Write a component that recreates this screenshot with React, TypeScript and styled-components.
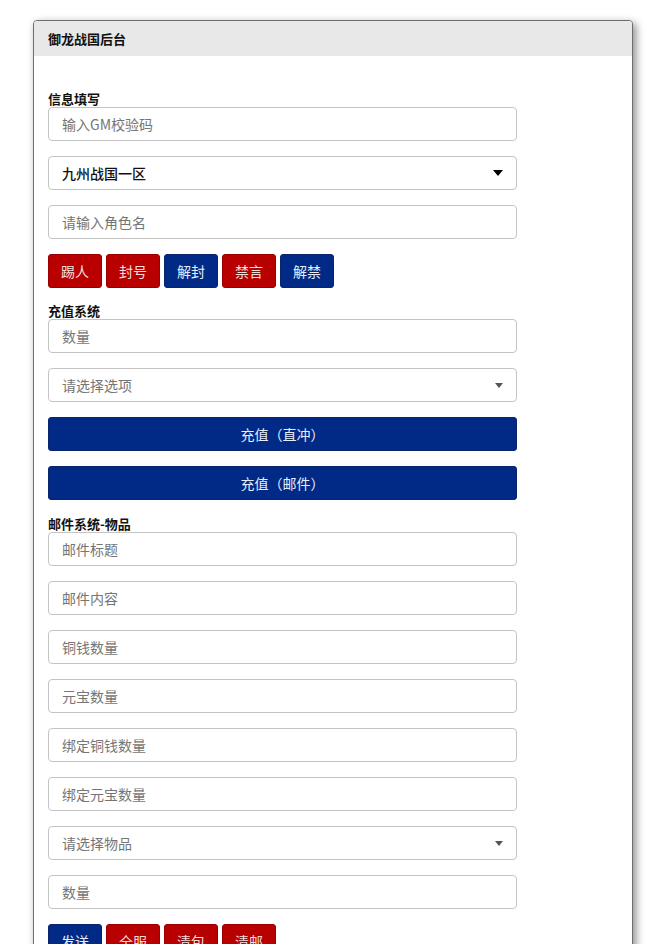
import React from 'react';
import styled, { createGlobalStyle } from 'styled-components';

const Global = createGlobalStyle`
  body {
    margin: 0;
    background: #fff;
    font-family: "Noto Sans CJK SC", "Noto Sans", "Liberation Sans", sans-serif;
  }
`;

const Page = styled.div`
  padding: 20px 0 0 33px;
`;

const Card = styled.div`
  width: 598px;
  border: 1px solid #6e6e6e;
  border-radius: 4px 4px 0 0;
  box-shadow: 3px 3px 8px rgba(0, 0, 0, 0.45);
  background: #fff;
  overflow: hidden;
`;

const Header = styled.div`
  height: 35px;
  background: #e8e8e8;
  display: flex;
  align-items: center;
  padding-left: 14px;
  font-size: 13px;
  font-weight: bold;
  color: #111;
`;

const Body = styled.div`
  padding: 34px 14px 20px 14px;
  width: 469px;
`;

const Label = styled.div<{ $top?: number }>`
  font-size: 13px;
  font-weight: bold;
  color: #111;
  line-height: 17px;
  margin-top: ${p => p.$top ?? 0}px;
`;

const Field = styled.input`
  display: block;
  box-sizing: border-box;
  width: 100%;
  height: 34px;
  margin-bottom: 15px;
  padding: 0 13px;
  border: 1px solid #c4c4c4;
  border-radius: 4px;
  font-family: inherit;
  font-size: 14px;
  color: #333;
  outline: none;
  &::placeholder {
    color: #757575;
  }
`;

const SelectBox = styled.div<{ $filled?: boolean }>`
  box-sizing: border-box;
  height: 34px;
  margin-bottom: 15px;
  padding: 0 13px;
  border: 1px solid #c4c4c4;
  border-radius: 4px;
  display: flex;
  align-items: center;
  justify-content: space-between;
  font-size: 14px;
  color: ${p => (p.$filled ? '#111' : '#757575')};
  font-weight: ${p => (p.$filled ? 500 : 400)};
`;

const Caret = ({ dark }: { dark?: boolean }) => (
  <svg width={dark ? 10 : 8} height={dark ? 6 : 5} viewBox="0 0 10 6">
    <path d="M0 0 L10 0 L5 6 Z" fill={dark ? '#000' : '#555'} />
  </svg>
);

const ButtonRow = styled.div`
  display: flex;
  gap: 4px;
`;

const Btn = styled.button<{ $red?: boolean; $wide?: boolean }>`
  box-sizing: border-box;
  height: 34px;
  width: ${p => (p.$wide ? '100%' : '54px')};
  display: block;
  border: 1px solid ${p => (p.$red ? '#9a0000' : '#0a246e')};
  border-radius: 3px;
  background: ${p => (p.$red ? '#b80000' : '#002a86')};
  color: ${p => (p.$red ? '#f4dede' : '#e6eefc')};
  font-family: inherit;
  font-size: 14px;
  padding: 0;
  margin-bottom: ${p => (p.$wide ? '15px' : '0')};
`;

const App: React.FC = () => (
  <Page>
    <Global />
    <Card>
      <Header>御龙战国后台</Header>
      <Body>
        <Label>信息填写</Label>
        <Field placeholder="输入GM校验码" />
        <SelectBox $filled>
          <span>九州战国一区</span>
          <Caret dark />
        </SelectBox>
        <Field placeholder="请输入角色名" />
        <ButtonRow>
          <Btn $red>踢人</Btn>
          <Btn $red>封号</Btn>
          <Btn>解封</Btn>
          <Btn $red>禁言</Btn>
          <Btn>解禁</Btn>
        </ButtonRow>

        <Label $top={14}>充值系统</Label>
        <Field placeholder="数量" />
        <SelectBox>
          <span>请选择选项</span>
          <Caret />
        </SelectBox>
        <Btn $wide>充值（直冲）</Btn>
        <Btn $wide>充值（邮件）</Btn>

        <Label $top={1}>邮件系统-物品</Label>
        <Field placeholder="邮件标题" />
        <Field placeholder="邮件内容" />
        <Field placeholder="铜钱数量" />
        <Field placeholder="元宝数量" />
        <Field placeholder="绑定铜钱数量" />
        <Field placeholder="绑定元宝数量" />
        <SelectBox>
          <span>请选择物品</span>
          <Caret />
        </SelectBox>
        <Field placeholder="数量" />
        <ButtonRow>
          <Btn>发送</Btn>
          <Btn $red>全服</Btn>
          <Btn $red>清包</Btn>
          <Btn $red>清邮</Btn>
        </ButtonRow>
      </Body>
    </Card>
  </Page>
);

export default App;
